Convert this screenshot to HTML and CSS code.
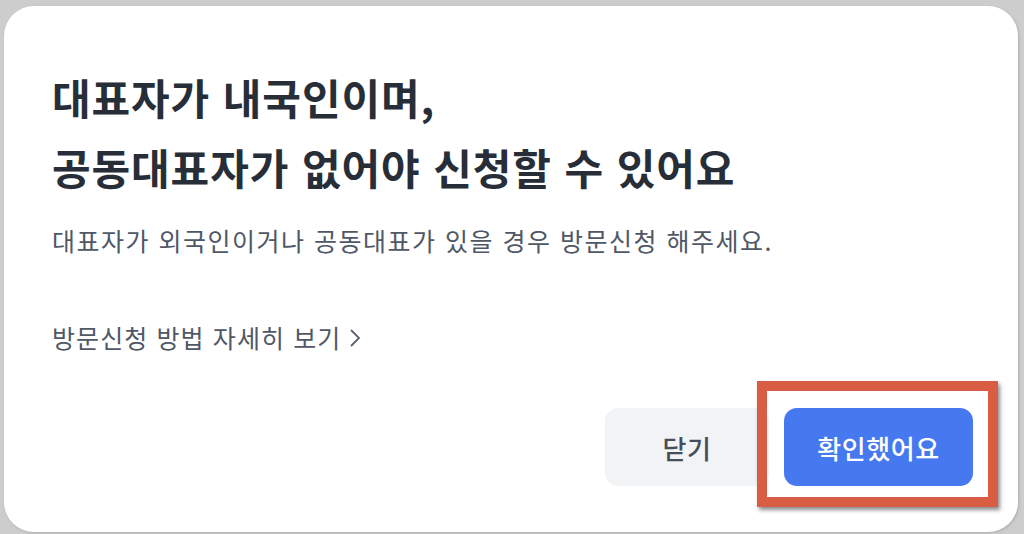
FILE: index.html
```html
<!DOCTYPE html>
<html lang="ko">
<head>
<meta charset="utf-8">
<title>방문신청 안내</title>
<link rel="stylesheet" href="styles.css">
</head>
<body>
  <div class="dialog">
    <h1 class="title">대표자가 내국인이며,<br>공동대표자가 없어야 신청할 수 있어요</h1>
    <p class="desc">대표자가 외국인이거나 공동대표가 있을 경우 방문신청 해주세요.</p>
    <a class="link">방문신청 방법 자세히 보기 <svg class="chev" width="12" height="20" viewBox="0 0 12 20"><path d="M2 2 L10 10 L2 18" fill="none" stroke="#5b6270" stroke-width="1.8"/></svg></a>
    <div class="actions">
      <button class="btn btn-secondary">닫기</button>
      <button class="btn btn-primary">확인했어요</button>
    </div>
  </div>
  <div class="highlight"></div>
</body>
</html>
```

FILE: styles.css
```css
* { box-sizing: border-box; }
html, body {
  margin: 0;
  padding: 0;
  width: 1024px;
  height: 534px;
  overflow: hidden;
}
body {
  background: #cdcdcd;
  font-family: "Noto Sans CJK KR", "Noto Sans", sans-serif;
  position: relative;
  padding: 6px 6px 0 4px;
}
.dialog {
  position: relative;
  background: #ffffff;
  border-radius: 30px;
  height: 526px;
  padding: 56px 45px 46px 48px;
  display: flex;
  flex-direction: column;
  box-shadow: 1px 1px 3px rgba(0,0,0,0.15);
}
.title {
  margin: 0;
  font-size: 42px;
  line-height: 70px;
  font-weight: 700;
  color: #282e38;
  letter-spacing: 0.9px;
}
.desc {
  margin: 20px 0 0;
  font-size: 25px;
  line-height: 36px;
  color: #505866;
  letter-spacing: 1.5px;
}
.link {
  margin-top: 61px;
  font-size: 25px;
  line-height: 36px;
  color: #505866;
  letter-spacing: 1.1px;
  display: flex;
  align-items: center;
  gap: 8px;
}
.chev { margin-top: 2px; }
.actions {
  margin-top: auto;
  display: flex;
  justify-content: flex-end;
  gap: 15px;
}
.btn {
  height: 78px;
  border: none;
  border-radius: 13px;
  font-family: "Noto Sans CJK KR", "Noto Sans", sans-serif;
  font-size: 26px;
  font-weight: 500;
  letter-spacing: 0.6px;
  padding: 0;
}
.btn-secondary {
  width: 164px;
  background: #f1f3f5;
  color: #474e5a;
}
.btn-primary {
  width: 189px;
  background: #4679f0;
  color: #ffffff;
}
.highlight {
  position: absolute;
  left: 757px;
  top: 381px;
  width: 241px;
  height: 126px;
  border: 10px solid #d95c45;
  box-shadow: 2px 3px 4px rgba(0,0,0,0.45);
}
```
